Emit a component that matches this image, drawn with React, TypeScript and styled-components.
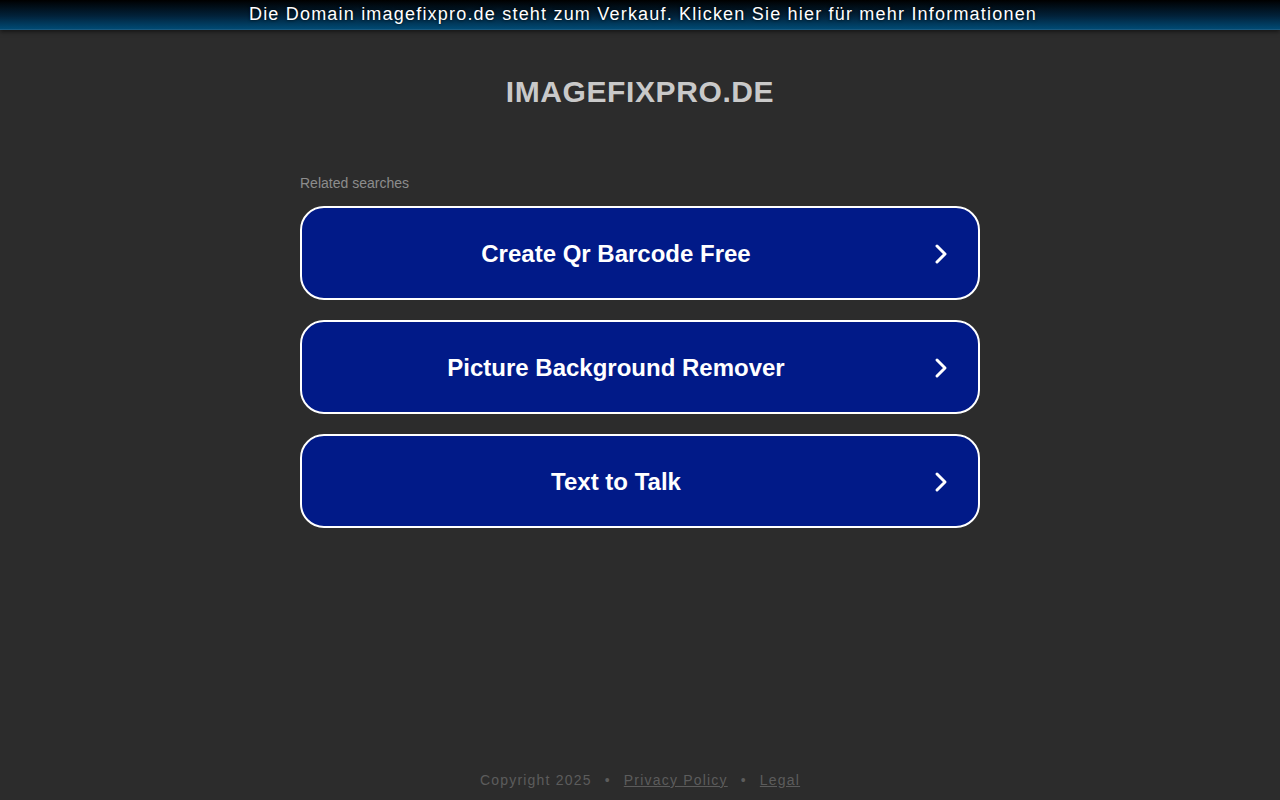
import styled, { createGlobalStyle } from "styled-components";

const GlobalStyle = createGlobalStyle`
  html, body {
    margin: 0;
    padding: 0;
    background: #2c2c2c;
    font-family: "Liberation Sans", Arial, sans-serif;
  }
`;

const Page = styled.div`
  min-height: 800px;
  display: flex;
  flex-direction: column;
  align-items: center;
`;

const TopBar = styled.a`
  display: block;
  box-sizing: border-box;
  width: 100%;
  height: 30px;
  padding-left: 6px;
  background: linear-gradient(to bottom, #000000 0%, #02223a 55%, #004a74 100%);
  border-bottom: 1px solid #1a5a80;
  box-shadow: 0 2px 4px rgba(0, 0, 0, 0.5);
  color: #ffffff;
  font-size: 18px;
  line-height: 28px;
  letter-spacing: 1.2px;
  text-align: center;
  text-decoration: none;
  text-shadow: 0 0 3px rgba(0, 0, 0, 0.9);
`;

const Title = styled.h1`
  margin: 44px 0 0;
  font-size: 30px;
  line-height: 36px;
  font-weight: 700;
  letter-spacing: 0.6px;
  color: #c9c9c9;
`;

const Searches = styled.div`
  width: 680px;
  margin-top: 65px;
  display: flex;
  flex-direction: column;
  gap: 20px;
`;

const Label = styled.div`
  font-size: 14px;
  line-height: 16px;
  color: #8d8d8d;
  margin-bottom: -5px;
`;

const SearchButton = styled.a`
  box-sizing: border-box;
  height: 94px;
  border: 2px solid #ffffff;
  border-radius: 24px;
  background: #011a88;
  display: flex;
  align-items: center;
  padding: 1px 28px 0 0;
  color: #ffffff;
  text-decoration: none;
`;

const ButtonText = styled.span`
  flex: 1;
  margin-right: 2px;
  text-align: center;
  font-size: 24px;
  font-weight: 700;
`;

const Chevron = () => (
  <svg width="18" height="24" viewBox="0 0 18 24" fill="none">
    <path
      d="M5 4 L13 12 L5 20"
      stroke="#ffffff"
      strokeWidth="3"
      strokeLinecap="round"
      strokeLinejoin="round"
    />
  </svg>
);

const Footer = styled.footer`
  margin-top: auto;
  padding-bottom: 12px;
  font-size: 14px;
  letter-spacing: 1.2px;
  color: #5c5c5c;
  display: flex;
  gap: 13px;
`;

const FooterLink = styled.a`
  color: #5c5c5c;
  text-decoration: underline;
`;

const items = ["Create Qr Barcode Free", "Picture Background Remover", "Text to Talk"];

export default function App() {
  return (
    <>
      <GlobalStyle />
      <Page>
        <TopBar href="#">
          Die Domain imagefixpro.de steht zum Verkauf. Klicken Sie hier für mehr Informationen
        </TopBar>
        <Title>IMAGEFIXPRO.DE</Title>
        <Searches>
          <Label>Related searches</Label>
          {items.map((item) => (
            <SearchButton key={item} href="#">
              <ButtonText>{item}</ButtonText>
              <Chevron />
            </SearchButton>
          ))}
        </Searches>
        <Footer>
          <span>Copyright 2025</span>
          <span>•</span>
          <FooterLink href="#">Privacy Policy</FooterLink>
          <span>•</span>
          <FooterLink href="#">Legal</FooterLink>
        </Footer>
      </Page>
    </>
  );
}
